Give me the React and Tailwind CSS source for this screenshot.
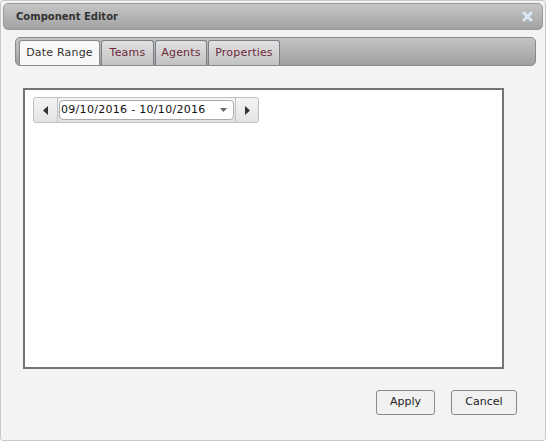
export default function App() {
  const tabs = ["Date Range", "Teams", "Agents", "Properties"];
  const widths = ["w-[81px]", "w-[53px]", "w-[52px]", "w-[72px]"];
  return (
    <div className="w-[546px] h-[441px] bg-[#f3f3f3] border border-[#c8c8c8] rounded-[3px] relative overflow-hidden" style={{ fontFamily: "Verdana, 'DejaVu Sans', sans-serif" }}>
      <div className="mx-[2px] mt-[2px] h-[27px] rounded-[5px] border border-[#9a9a9a] bg-gradient-to-b from-[#c6c6c6] to-[#a3a3a3] flex items-center justify-between pl-[12px] pr-[9px]">
        <span className="text-[10px] font-bold text-[#333]">Component Editor</span>
        <svg width="11" height="11" viewBox="0 0 11 11">
          <path d="M2 2 L9 9 M9 2 L2 9" stroke="#dde8f5" strokeWidth="3" strokeLinecap="round" />
        </svg>
      </div>
      <div className="ml-[14px] mt-[7px] w-[521px] h-[29px] rounded-[5px] border border-[#8a8a8a] bg-gradient-to-b from-[#c4c4c4] to-[#a0a0a0] flex items-end pl-[3px]">
        {tabs.map((t, i) => (
          <div
            key={t}
            className={`${widths[i]} h-[25px] flex items-center justify-center text-[11px] tracking-[0.2px] border border-b-0 rounded-t-[3px] ${i === 0 ? "bg-[#f8f8f8] border-[#8a8a8a] text-[#333]" : "bg-gradient-to-b from-[#e2e2e2] to-[#c2c2c2] border-[#7a8088] text-[#6b2a3a] ml-[1px]"}`}
          >
            {t}
          </div>
        ))}
      </div>
      <div className="ml-[22px] mt-[22px] w-[481px] h-[281px] border-2 border-[#747474] bg-white pt-[7px] pl-[8px]">
        <div className="flex items-center w-[226px] h-[26px] rounded-[3px] border border-[#c0c0c0] bg-gradient-to-b from-[#f4f4f4] to-[#e4e4e4]">
          <div className="w-[24px] h-full flex items-center justify-center border-r border-[#c0c0c0]">
            <svg width="6" height="9" viewBox="0 0 6 9"><path d="M5 0 L0 4.5 L5 9 Z" fill="#333" /></svg>
          </div>
          <div className="ml-[1px] w-[175px] h-[20px] rounded-[4px] border border-[#aaa] bg-white flex items-center pl-[1px] pr-[6px] justify-between">
            <span className="text-[11px] tracking-[0.3px] text-[#111]">09/10/2016 - 10/10/2016</span>
            <svg width="7" height="4" viewBox="0 0 7 4"><path d="M0 0 L7 0 L3.5 4 Z" fill="#666" /></svg>
          </div>
          <div className="ml-[1px] flex-1 h-full flex items-center justify-center border-l border-[#c0c0c0]">
            <svg width="6" height="9" viewBox="0 0 6 9"><path d="M1 0 L6 4.5 L1 9 Z" fill="#333" /></svg>
          </div>
        </div>
      </div>
      <div className="flex justify-end gap-[16px] mr-[28px] mt-[21px]">
        <button className="w-[59px] h-[25px] rounded-[3px] border border-[#8a8a8a] bg-[#f1f1f1] text-[11px] text-[#222]">Apply</button>
        <button className="w-[66px] h-[25px] rounded-[3px] border border-[#8a8a8a] bg-[#f1f1f1] text-[11px] text-[#222]">Cancel</button>
      </div>
    </div>
  );
}
